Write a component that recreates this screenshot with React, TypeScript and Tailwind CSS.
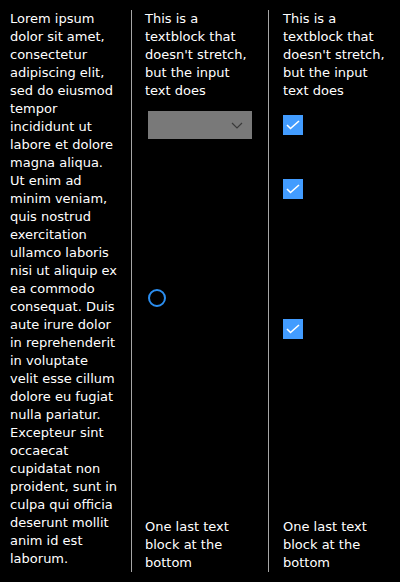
const LOREM =
  'Lorem ipsum dolor sit amet, consectetur adipiscing elit, sed do eiusmod tempor incididunt ut labore et dolore magna aliqua. Ut enim ad minim veniam, quis nostrud exercitation ullamco laboris nisi ut aliquip ex ea commodo consequat. Duis aute irure dolor in reprehenderit in voluptate velit esse cillum dolore eu fugiat nulla pariatur. Excepteur sint occaecat cupidatat non proident, sunt in culpa qui officia deserunt mollit anim id est laborum.'

function Check() {
  return (
    <div className="flex h-5 w-5 items-center justify-center bg-[#429cff]">
      <svg width="14" height="10" viewBox="0 0 14 10" fill="none">
        <path d="M1 5l3.5 3.5L13 1" stroke="white" strokeWidth="1.6" />
      </svg>
    </div>
  )
}

function Divider() {
  return <div className="w-px shrink-0 self-stretch bg-[#a6a6a6]" />
}

export default function App() {
  return (
    <div
      className="flex h-[582px] w-[400px] bg-black py-[10px] text-[13px] leading-[18px] text-white"
      style={{ fontFamily: '"DejaVu Sans", sans-serif' }}
    >
      <div className="w-[131px] shrink-0 pl-[10px] pr-[12px]">{LOREM}</div>
      <Divider />

      <div className="flex w-[136px] shrink-0 flex-col pl-[13px]">
        <p className="w-[106px]">This is a textblock that doesn't stretch, but the input text does</p>
        <div className="ml-[3px] mt-[11px] flex h-7 w-[104px] items-center justify-end bg-[#797979] pr-[9px]">
          <svg width="12" height="7" viewBox="0 0 12 7" fill="none">
            <path d="M1 1l5 5 5-5" stroke="#3a3a3a" strokeWidth="1.2" />
          </svg>
        </div>
        <div className="ml-[3px] mt-[150px] h-[18px] w-[18px] rounded-full border-2 border-[#2b8ef0]" />
        <p className="mt-auto w-[106px]">One last text block at the bottom</p>
      </div>
      <Divider />

      <div className="flex flex-1 flex-col pl-[14px]">
        <p className="w-[106px]">This is a textblock that doesn't stretch, but the input text does</p>
        <div className="mt-[15px]">
          <Check />
        </div>
        <div className="mt-[44px]">
          <Check />
        </div>
        <div className="mt-[120px]">
          <Check />
        </div>
        <p className="mt-auto w-[106px]">One last text block at the bottom</p>
      </div>
    </div>
  )
}
